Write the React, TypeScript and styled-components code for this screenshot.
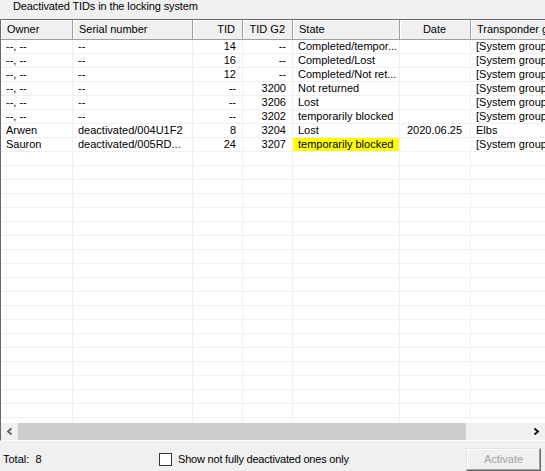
import React from "react"
import styled, { createGlobalStyle } from "styled-components"

const GlobalStyle = createGlobalStyle`
  html, body {
    margin: 0;
    padding: 0;
    background: #f0f0f0;
    overflow: hidden;
  }
  body {
    font-family: "Liberation Sans", Arial, sans-serif;
    font-size: 11px;
    color: #000;
  }
`

const Window = styled.div`
  width: 545px;
  height: 471px;
  overflow: hidden;
  display: flex;
  flex-direction: column;
`

const Title = styled.div`
  height: 19px;
  line-height: 12px;
  padding-left: 13px;
  letter-spacing: -0.12px;
  white-space: nowrap;
`

const Grid = styled.div`
  width: 545px;
  height: 422px;
  box-sizing: border-box;
  border-top: 1px solid #696969;
  border-left: 1px solid #696969;
  border-bottom: 1px solid #ffffff;
  display: flex;
  flex-direction: column;
  overflow: hidden;
  background: #fff;
  flex-shrink: 0;
`

const HeaderRow = styled.div`
  display: flex;
  height: 20px;
  flex-shrink: 0;
  background: #f0f0f0;
`

const HeaderCell = styled.div<{ $w: number; $align?: string }>`
  width: ${p => p.$w}px;
  flex-shrink: 0;
  box-sizing: border-box;
  border-right: 1px solid #a0a0a0;
  border-bottom: 1px solid #a0a0a0;
  box-shadow: inset 1px 1px 0 #fff;
  padding: 0 7px 0 6px;
  line-height: 19px;
  text-align: ${p => p.$align || "left"};
  white-space: nowrap;
  overflow: hidden;
`

const Body = styled.div`
  flex: 1;
  overflow: hidden;
  background: #fff;
`

const Row = styled.div`
  display: flex;
  height: 14px;
`

const Cell = styled.div<{ $w: number; $align?: string; $bg?: string }>`
  width: ${p => p.$w}px;
  flex-shrink: 0;
  box-sizing: border-box;
  border-right: 1px solid #f0f0f0;
  border-bottom: 1px solid #f0f0f0;
  padding: 0 6px 0 5px;
  line-height: 13px;
  text-align: ${p => p.$align || "left"};
  background: ${p => p.$bg || "transparent"};
  white-space: nowrap;
  overflow: hidden;
`

const ScrollBar = styled.div`
  display: flex;
  height: 17px;
  flex-shrink: 0;
  background: #f0f0f0;
`

const ArrowButton = styled.div`
  width: 17px;
  height: 17px;
  flex-shrink: 0;
  display: flex;
  align-items: center;
  justify-content: center;
`

const Thumb = styled.div`
  width: 448px;
  height: 17px;
  flex-shrink: 0;
  background: #cdcdcd;
`

const Track = styled.div`
  flex: 1;
`

const Footer = styled.div`
  display: flex;
  align-items: center;
  height: 24px;
  padding-top: 6px;
`

const Total = styled.div`
  width: 156px;
  padding-left: 3px;
  white-space: nowrap;
`

const CheckLabel = styled.label`
  display: flex;
  align-items: center;
  gap: 6px;
  letter-spacing: -0.2px;
  white-space: nowrap;
`

const CheckBox = styled.span`
  width: 13px;
  height: 13px;
  box-sizing: border-box;
  border: 1px solid #333;
  background: #fff;
  display: inline-block;
`

const Button = styled.button`
  margin-left: auto;
  margin-right: 4px;
  width: 75px;
  height: 23px;
  box-sizing: border-box;
  font-family: inherit;
  font-size: 11px;
  color: #a0a0a0;
  background: #f0f0f0;
  border: 1px solid;
  border-color: #e3e3e3 #696969 #696969 #e3e3e3;
  box-shadow: inset -1px -1px 0 #a0a0a0, inset 1px 1px 0 #fff;
  padding: 0;
`

type Col = { title: string; w: number; align?: string; headAlign?: string }

const columns: Col[] = [
  { title: "Owner", w: 72 },
  { title: "Serial number", w: 120 },
  { title: "TID", w: 50, align: "right", headAlign: "right" },
  { title: "TID G2", w: 50, align: "right", headAlign: "right" },
  { title: "State", w: 107 },
  { title: "Date", w: 71, align: "center", headAlign: "center" },
  { title: "Transponder groups", w: 160 },
]

const rows: string[][] = [
  ["--, --", "--", "14", "--", "Completed/tempor...", "", "[System groups]"],
  ["--, --", "--", "16", "--", "Completed/Lost", "", "[System groups]"],
  ["--, --", "--", "12", "--", "Completed/Not ret...", "", "[System groups]"],
  ["--, --", "--", "--", "3200", "Not returned", "", "[System groups]"],
  ["--, --", "--", "--", "3206", "Lost", "", "[System groups]"],
  ["--, --", "--", "--", "3202", "temporarily blocked", "", "[System groups]"],
  ["Arwen", "deactivated/004U1F2", "8", "3204", "Lost", "2020.06.25", "Elbs"],
  ["Sauron", "deactivated/005RD...", "24", "3207", "temporarily blocked", "", "[System groups]"],
]

const emptyRows = Array.from({ length: 22 }, () => columns.map(() => ""))

const Chevron = ({ dir, color }: { dir: "left" | "right"; color: string }) => (
  <svg width="17" height="17" viewBox="0 0 17 17">
    <polyline
      points={dir === "left" ? "10.5,5.5 7,8.5 10.5,11.5" : "6.5,5.5 10,8.5 6.5,11.5"}
      fill="none"
      stroke={color}
      strokeWidth="1.8"
    />
  </svg>
)

export default function App() {
  return (
    <Window>
      <GlobalStyle />
      <Title>Deactivated TIDs in the locking system</Title>
      <Grid>
        <HeaderRow>
          {columns.map(c => (
            <HeaderCell key={c.title} $w={c.w} $align={c.headAlign}>
              {c.title}
            </HeaderCell>
          ))}
        </HeaderRow>
        <Body>
          {[...rows, ...emptyRows].map((r, i) => (
            <Row key={i}>
              {r.map((v, j) => (
                <Cell
                  key={j}
                  $w={columns[j].w}
                  $align={columns[j].align}
                  $bg={i === 7 && j === 4 ? "#ffff00" : undefined}
                >
                  {v}
                </Cell>
              ))}
            </Row>
          ))}
        </Body>
        <ScrollBar>
          <ArrowButton>
            <Chevron dir="left" color="#606060" />
          </ArrowButton>
          <Thumb />
          <Track />
          <ArrowButton>
            <Chevron dir="right" color="#000" />
          </ArrowButton>
        </ScrollBar>
      </Grid>
      <Footer>
        <Total>Total:&nbsp; 8</Total>
        <CheckLabel>
          <CheckBox />
          Show not fully deactivated ones only
        </CheckLabel>
        <Button disabled>Activate</Button>
      </Footer>
    </Window>
  )
}
